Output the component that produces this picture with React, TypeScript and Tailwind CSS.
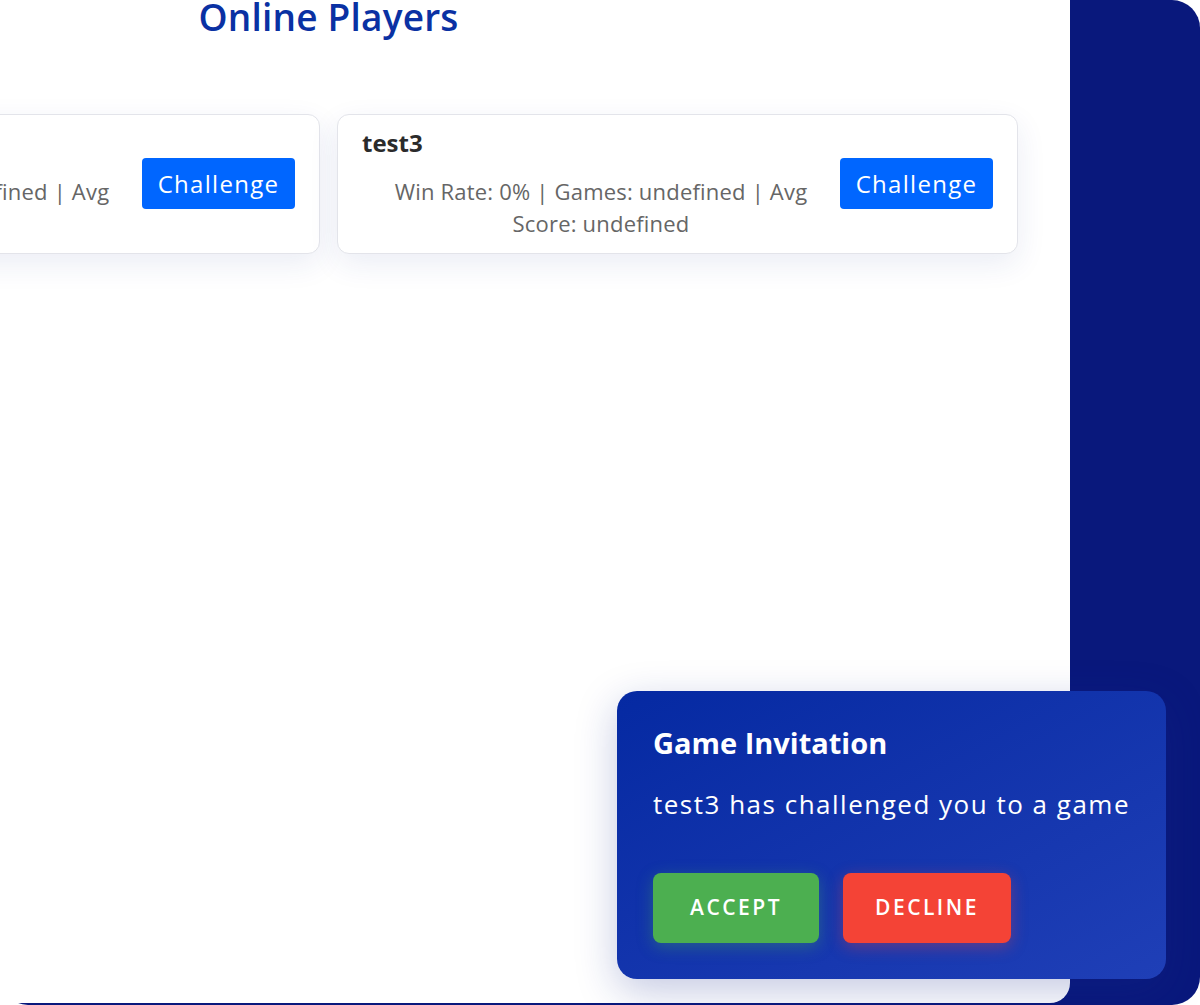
import React from 'react';

type Player = {
    name: string;
    winRate: string;
};

const players: Player[] = [
    { name: 'test2', winRate: '0%' },
    { name: 'test3', winRate: '0%' },
];

const PlayerCard: React.FC<{ player: Player }> = ({ player }) => {
    return (
        <div className="flex items-center rounded-xl border border-[#e3e4ea] bg-white pt-[16px] pb-[14px] pl-[24px] pr-[24px] shadow-[0_10px_30px_rgba(30,50,140,0.09)]">
            <div className="flex-1">
                <h3 className="text-[24px] font-bold leading-[24px] text-[#2b2b2b]">{player.name}</h3>
                <p className="mx-[20px] mt-[20px] text-center text-[22px] leading-[32px] tracking-[0.2px] text-[#666]">
                    Win Rate: {player.winRate} | Games: undefined | Avg Score: undefined
                </p>
            </div>
            <button className="-mt-[3px] h-[51px] w-[153px] rounded-[4px] bg-[#0066ff] text-[24px] tracking-[1.3px] text-white">
                Challenge
            </button>
        </div>
    );
};

export default function App() {
    return (
        <div className="relative h-[1005px] w-[1200px] overflow-hidden bg-white font-['Open_Sans',sans-serif]">
            <div className="flex h-full rounded-[28px] bg-[#09187c]">
                {/* main panel, scrolled so its left part is off screen */}
                <main className="flex h-[1003px] w-[1070px] justify-end overflow-hidden rounded-br-[20px] bg-white">
                    <div className="mr-[52px] w-[1379px] shrink-0">
                        <h2 className="-mt-[5px] text-center text-[37px] font-semibold leading-[44px] tracking-[0.2px] text-[#0a31a3]">
                            Online Players
                        </h2>
                        <div className="mt-[75px] grid grid-cols-2 gap-[17px]">
                            {players.map((p) => (
                                <PlayerCard key={p.name} player={p} />
                            ))}
                        </div>
                    </div>
                </main>
            </div>

            {/* invitation popup */}
            <div className="absolute right-[34px] bottom-[26px] w-[549px] rounded-[20px] bg-gradient-to-br from-[#0529a2] to-[#1f3fb7] px-[36px] pt-[34px] pb-[36px] text-white shadow-[0_12px_40px_rgba(20,40,140,0.25)]">
                <h3 className="text-[29px] font-bold leading-[36px]">Game Invitation</h3>
                <p className="mt-[25px] whitespace-nowrap text-[26px] leading-[36px] tracking-[1.5px]">
                    test3 has challenged you to a game
                </p>
                <div className="mt-[51px] flex gap-[24px]">
                    <button className="h-[70px] w-[166px] rounded-[8px] bg-[#4caf50] text-[21px] font-semibold tracking-[2.5px] shadow-[0_4px_16px_rgba(76,175,80,0.35)]">
                        ACCEPT
                    </button>
                    <button className="h-[70px] w-[168px] rounded-[8px] bg-[#f44336] text-[21px] font-semibold tracking-[2.5px] shadow-[0_4px_16px_rgba(244,67,54,0.35)]">
                        DECLINE
                    </button>
                </div>
            </div>
        </div>
    );
}
